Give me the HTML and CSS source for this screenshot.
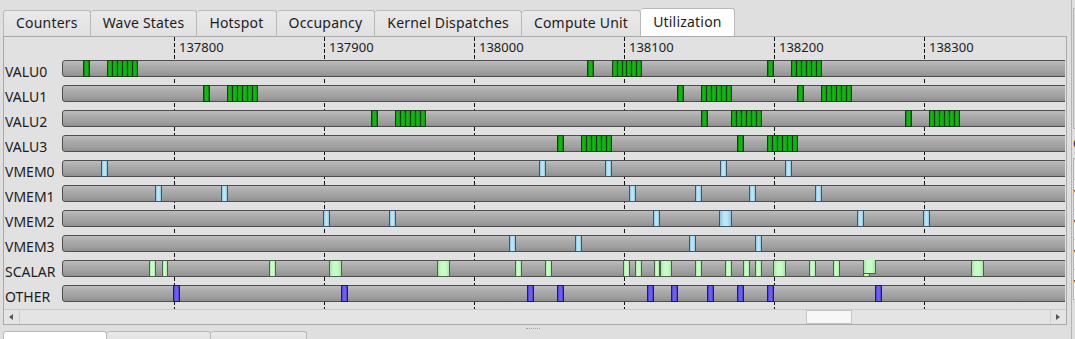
FILE: index.html
```html
<!DOCTYPE html>
<html lang="en">
<head>
  <meta charset="UTF-8" />
  <meta name="viewport" content="width=device-width, initial-scale=1.0" />
  <link rel="stylesheet" href="styles.css">
</head>
<body>
  <div class="app">
    <div class="main">
      <div class="tabs">
        <div class="tab">Counters</div>
        <div class="tab">Wave States</div>
        <div class="tab">Hotspot</div>
        <div class="tab">Occupancy</div>
        <div class="tab">Kernel Dispatches</div>
        <div class="tab">Compute Unit</div>
        <div class="tab active">Utilization</div>
      </div>

      <div class="pane">
        <div class="chart">
          <div class="grid" id="grid"></div>
          <div class="ruler" id="ruler"></div>
          <div class="rows" id="rows"></div>
        </div>
        <div class="hscroll">
          <div class="arrow left-arrow"></div>
          <div class="scroll-track">
            <div class="scroll-handle"></div>
          </div>
          <div class="arrow right-arrow"></div>
        </div>
      </div>

      <div class="splitter"><span class="grip"></span></div>

      <div class="tabs bottom-tabs">
        <div class="tab active"></div>
        <div class="tab"></div>
        <div class="tab"></div>
      </div>
    </div>

    <!-- Side panel, mostly cut off at the window edge -->
    <div class="side">
      <div class="side-box"></div>
      <div class="side-title">C</div>
      <div class="side-table">
        <div class="side-head"></div>
        <div class="side-row">V</div>
        <div class="side-row">V</div>
        <div class="side-row">V</div>
        <div class="side-row">V</div>
      </div>
    </div>
  </div>

  <script>
    const trackLeft = 62;  // page x where the bars start
    const ticks = [137800, 137900, 138000, 138100, 138200, 138300];
    const tickX = 174;     // page x of the first tick
    const pxPerCycle = 1.5;

    // [kind, startX, endX] in page pixels
    const rows = [
      ["VALU0", [["g",83,90],["c",107,138],["g",587,594],["c",612,642],["g",767,774],["c",791,822]]],
      ["VALU1", [["g",203,210],["c",227,258],["g",677,684],["c",701,732],["g",797,804],["c",821,852]]],
      ["VALU2", [["g",371,378],["c",395,426],["g",701,708],["c",731,762],["g",905,912],["c",929,960]]],
      ["VALU3", [["g",557,564],["c",581,612],["g",737,744],["c",767,798]]],
      ["VMEM0", [["b",101,108],["b",539,546],["b",605,612],["b",720,727],["b",785,792]]],
      ["VMEM1", [["b",155,162],["b",221,228],["b",629,636],["b",695,702],["b",749,756],["b",815,822]]],
      ["VMEM2", [["b",323,330],["b",389,396],["b",653,660],["b",719,732],["b",857,864],["b",923,930]]],
      ["VMEM3", [["b",509,516],["b",575,582],["b",689,696],["b",755,762]]],
      ["SCALAR", [["s",149,156],["s",162,168],["s",269,276],["s",329,342],["s",437,450],["s",515,522],
                  ["s",545,552],["s",623,630],["s",635,642],["s",654,660],["s",660,672],["s",695,702],
                  ["s",725,732],["s",743,750],["s",755,762],["s",773,786],["s",809,816],["s",833,840],
                  ["s",863,870,"low"],["s",863,876,"raised"],["s",971,984]]],
      ["OTHER", [["p",173,180],["p",341,348],["p",527,534],["p",557,564],["p",647,654],["p",671,678],
                 ["p",707,714],["p",737,744],["p",767,774],["p",875,882]]]
    ];

    const ruler = document.getElementById("ruler");
    const grid = document.getElementById("grid");
    ticks.forEach((t, i) => {
      const x = tickX + (t - ticks[0]) * pxPerCycle - 4; // chart starts at page x 4
      const line = document.createElement("div");
      line.className = "grid-line";
      line.style.left = x + "px";
      grid.appendChild(line);

      const label = document.createElement("div");
      label.className = "tick-label";
      label.style.left = (x + 5) + "px";
      label.textContent = t;
      ruler.appendChild(label);
    });

    const rowsEl = document.getElementById("rows");
    rows.forEach(([name, segs]) => {
      const row = document.createElement("div");
      row.className = "row";

      const label = document.createElement("div");
      label.className = "row-label";
      label.textContent = name;
      row.appendChild(label);

      const track = document.createElement("div");
      track.className = "track";
      const bar = document.createElement("div");
      bar.className = "bar";
      track.appendChild(bar);

      segs.forEach(([kind, x1, x2, extra]) => {
        const seg = document.createElement("div");
        seg.className = "seg seg-" + kind + (extra ? " seg-" + extra : "");
        seg.style.left = (x1 - trackLeft) + "px";
        seg.style.width = (x2 - x1) + "px";
        if (kind === "c") {
          for (let i = 0; i < 6; i++) {
            seg.appendChild(document.createElement("span"));
          }
        }
        track.appendChild(seg);
      });

      row.appendChild(track);
      rowsEl.appendChild(row);
    });
  </script>
</body>
</html>
```

FILE: styles.css
```css
body {
  margin: 0;
  background-color: #dfdfdf;
  font-family: 'Noto Sans', 'Liberation Sans', sans-serif;
  color: #1c1c1c;
  overflow: hidden;
}

.app {
  display: flex;
  width: 1075px;
  height: 339px;
  overflow: hidden;
}

.main {
  width: 1069px;
  flex-shrink: 0;
}

/* Tab bars */
.tabs {
  display: flex;
  align-items: flex-end;
  height: 36px;
  padding-left: 3px;
  box-sizing: border-box;
}

.tab {
  height: 26px;
  box-sizing: border-box;
  padding: 0 12px;
  border: 1px solid #b9b9b9;
  border-bottom: none;
  border-left: none;
  border-radius: 3px 3px 0 0;
  background: linear-gradient(#e9e9e9, #e1e1e1);
  font-size: 14px;
  letter-spacing: 0.2px;
  line-height: 24px;
  white-space: nowrap;
}

.tab:first-child {
  border-left: 1px solid #b9b9b9;
}

.tab.active {
  height: 28px;
  background: #ffffff;
  line-height: 25px;
}

/* Main pane */
.pane {
  margin-left: 3px;
  width: 1064px;
  box-sizing: border-box;
  border: 1px solid #a9a9a9;
  background-color: #e1e1e1;
}

.chart {
  position: relative;
  height: 272px;
  overflow: hidden;
}

.grid {
  position: absolute;
  inset: 0;
}

.grid-line {
  position: absolute;
  top: 0;
  bottom: 0;
  width: 1px;
  background: repeating-linear-gradient(to bottom, #111 0 4px, transparent 4px 6px);
}

.ruler {
  position: relative;
  height: 21px;
}

.tick-label {
  position: absolute;
  top: 3px;
  font-size: 13px;
  line-height: 15px;
  color: #1c1c1c;
}

.rows {
  position: relative;
}

.row {
  display: flex;
  height: 25px;
}

.row-label {
  width: 57px;
  padding-left: 1px;
  padding-top: 5px;
  font-size: 14px;
  line-height: 17px;
  white-space: nowrap;
}

.track {
  position: relative;
  margin-top: 2px;
  width: 1003px;
  height: 17px;
  overflow: hidden;
}

.bar {
  position: absolute;
  top: 0;
  left: 0;
  width: 1020px;
  height: 17px;
  box-sizing: border-box;
  border: 1px solid #4e4e4e;
  border-radius: 3px;
  background: linear-gradient(#bdbdbd, #aaaaaa 35%, #a0a0a0 70%, #909090);
}

.seg {
  position: absolute;
  top: 0;
  height: 17px;
  box-sizing: border-box;
  border: 1px solid #3a3a3a;
}

.seg-g {
  background: linear-gradient(to right, #0a7a0a, #10b810 30%, #10b810 70%, #0a7a0a);
  border-color: #1e3a1e;
}

.seg-c {
  display: flex;
  border-color: #1e3a1e;
  background: #0a7a0a;
}

.seg-c span {
  flex: 1;
  border-right: 1px solid #0c3d0c;
  background: linear-gradient(to right, #0c9a0c, #14bc14 40%, #0e9e0e);
}

.seg-c span:last-child {
  border-right: none;
}

.seg-b {
  background: linear-gradient(to right, #8cc6e0, #b9e6fb 35%, #b9e6fb 65%, #8cc6e0);
  border-color: #3c5666;
}

.seg-s {
  background: linear-gradient(to right, #a8e6a8, #c6fcc6 30%, #c6fcc6 70%, #a8e6a8);
  border-color: #4c5e4c;
}

.seg-raised {
  top: -1px;
  height: 15px;
}

.seg-low {
  top: 13px;
  height: 4px;
}

.seg-p {
  background: linear-gradient(to right, #4a3ed0, #6d62f6 35%, #6d62f6 65%, #4a3ed0);
  border-color: #201c58;
}

/* Horizontal scroll bar */
.hscroll {
  display: flex;
  height: 14px;
  border-top: 1px solid #c9c9c9;
  background-color: #e4e4e4;
}

.arrow {
  position: relative;
  width: 15px;
}

.left-arrow {
  border-right: 1px solid #cfcfcf;
}

.right-arrow {
  border-left: 1px solid #cfcfcf;
}

.arrow::after {
  content: "";
  position: absolute;
  top: 4px;
  border-top: 3px solid transparent;
  border-bottom: 3px solid transparent;
}

.left-arrow::after {
  left: 5px;
  border-right: 4px solid #555;
}

.right-arrow::after {
  left: 5px;
  border-left: 4px solid #555;
}

.scroll-track {
  position: relative;
  flex: 1;
}

.scroll-handle {
  position: absolute;
  top: 0;
  bottom: 0;
  left: 786px;
  width: 46px;
  box-sizing: border-box;
  border: 1px solid #c4c4c4;
  background-color: #f7f7f7;
}

/* Splitter and bottom tabs */
.splitter {
  height: 6px;
  display: flex;
  justify-content: center;
  align-items: center;
}

.grip {
  width: 14px;
  border-top: 1px dotted #a4a4a4;
  margin-left: -4px;
}

.bottom-tabs {
  height: auto;
  align-items: flex-start;
}

.bottom-tabs .tab {
  height: 12px;
  width: 104px;
  padding: 0;
}

.bottom-tabs .tab:nth-child(3) {
  width: 96px;
}

/* Side panel */
.side {
  flex: 1;
  margin-left: 2px;
  border-left: 1px solid #b4b4b4;
  padding-top: 8px;
  overflow: hidden;
}

.side-box {
  height: 119px;
  border: 1px solid #b4b4b4;
  border-right: none;
  margin-left: 1px;
}

.side-title {
  margin-top: 6px;
  margin-left: 1px;
  font-size: 13px;
  line-height: 16px;
  color: #1a1a1a;
}

.side-table {
  margin-top: 7px;
  margin-left: 1px;
  border-left: 1px solid #b4b4b4;
}

.side-head {
  height: 20px;
  border-top: 1px solid #b4b4b4;
  border-bottom: 1px solid #b4b4b4;
  background-color: #eeeeee;
}

.side-row {
  height: 29px;
  border-bottom: 1px solid #c8c8c8;
  background-color: #ffffff;
  font-size: 13px;
  line-height: 29px;
  color: #1a1a1a;
}
```
